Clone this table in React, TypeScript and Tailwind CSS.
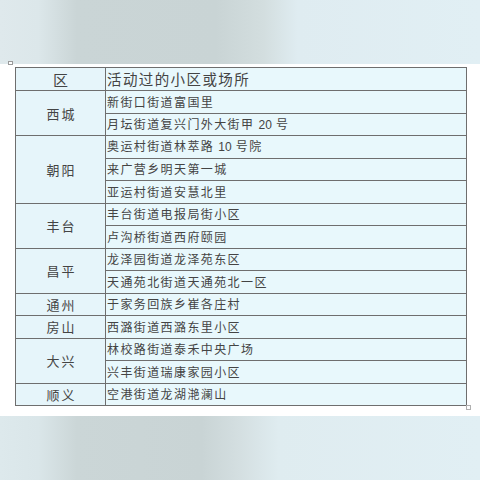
import React from "react";

type Group = { d: string; items: React.ReactNode[] };

const N = ({ children }: { children: React.ReactNode }) => (
  <span className="font-['Liberation_Sans',sans-serif] tracking-normal">{children}</span>
);

const groups: Group[] = [
  { d: "西城", items: ["新街口街道富国里", <>月坛街道复兴门外大街甲 <N>20</N> 号</>] },
  { d: "朝阳", items: [<>奥运村街道林萃路 <N>10</N> 号院</>, "来广营乡明天第一城", "亚运村街道安慧北里"] },
  { d: "丰台", items: ["丰台街道电报局街小区", "卢沟桥街道西府颐园"] },
  { d: "昌平", items: ["龙泽园街道龙泽苑东区", "天通苑北街道天通苑北一区"] },
  { d: "通州", items: ["于家务回族乡崔各庄村"] },
  { d: "房山", items: ["西潞街道西潞东里小区"] },
  { d: "大兴", items: ["林校路街道泰禾中央广场", "兴丰街道瑞康家园小区"] },
  { d: "顺义", items: ["空港街道龙湖滟澜山"] },
];

export default function App() {
  return (
    <div className="w-[480px] h-[480px] overflow-hidden bg-white font-['Noto_Sans_CJK_SC',sans-serif] text-[#444444] relative">
      <div className="h-[64px] bg-[linear-gradient(to_right,#dfe9ec_0%,#dce7ea_8%,#cad5d6_16%,#c9d4d5_45%,#d3dedf_55%,#dfecf1_62%,#e1eff4_100%)]" />
      <div className="pt-[3px] pb-[10px] pl-[15px]">
        <table className="border-collapse w-[452px] table-fixed">
          <colgroup>
            <col className="w-[90px]" />
            <col />
          </colgroup>
          <tbody>
            <tr className="h-[23px]">
              <td className="border border-[#6e6e6e] bg-[#e6f5fa] text-center text-[15px] leading-none p-0">区</td>
              <td className="border border-[#6e6e6e] bg-[#e8f8fc] text-[14.5px] tracking-[1.4px] leading-none p-0 pl-[1px]">活动过的小区或场所</td>
            </tr>
            {groups.map((g) =>
              g.items.map((it, i) => (
                <tr key={g.d + i} className="h-[22.5px]">
                  {i === 0 && (
                    <td
                      rowSpan={g.items.length}
                      className="border border-[#6e6e6e] bg-[#e6f5fa] text-center text-[13px] tracking-[2px] leading-none p-0 pl-[2px]"
                    >
                      {g.d}
                    </td>
                  )}
                  <td className="border border-[#6e6e6e] bg-[#e8f8fc] text-[12px] tracking-[1.4px] leading-none p-0 pl-[1px] whitespace-nowrap">
                    {it}
                  </td>
                </tr>
              ))
            )}
          </tbody>
        </table>
      </div>
      <div className="h-[65px] bg-[linear-gradient(to_right,#dde9ec_0%,#dae6e9_8%,#cbd6d7_16%,#c9d4d5_42%,#d4dfe1_50%,#dfecf0_58%,#e1eff4_100%)]" />
      <div className="absolute left-[8px] top-[61px] w-[5px] h-[4px] border border-[#9a9a9a] bg-white" />
      <div className="absolute left-[466px] top-[405px] w-[5px] h-[5px] border border-[#b0b0b0] bg-white" />
    </div>
  );
}
